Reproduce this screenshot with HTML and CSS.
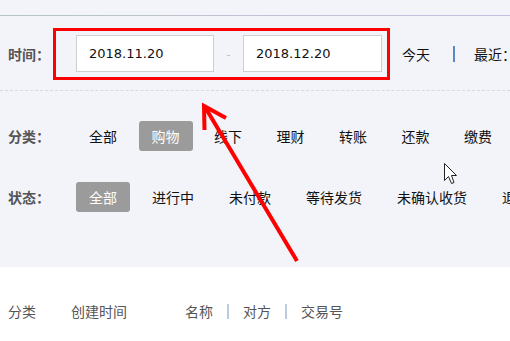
FILE: index.html
```html
<!DOCTYPE html>
<html lang="zh-CN">
<head>
    <title>交易记录</title>
    <link rel="stylesheet" href="styles.css">
    <meta name="viewport" content="width=device-width, initial-scale=1.0" charset="utf-8">
</head>
<body>
    <div class="page">
        <div class="filters">
            <div class="top-line"></div>

            <!-- time range -->
            <div class="row time-row">
                <span class="label">时间：</span>
                <div class="date-input">2018.11.20</div>
                <span class="dash">-</span>
                <div class="date-input">2018.12.20</div>
                <span class="quick today">今天</span>
                <span class="sep"></span>
                <span class="quick">最近：</span>
            </div>

            <div class="divider"></div>

            <!-- category -->
            <div class="row tag-row category-row">
                <span class="label">分类：</span>
                <span class="tag">全部</span>
                <span class="tag active">购物</span>
                <span class="tag">线下</span>
                <span class="tag">理财</span>
                <span class="tag">转账</span>
                <span class="tag">还款</span>
                <span class="tag">缴费</span>
            </div>

            <!-- status -->
            <div class="row tag-row status-row">
                <span class="label">状态：</span>
                <span class="tag active">全部</span>
                <span class="tag">进行中</span>
                <span class="tag">未付款</span>
                <span class="tag">等待发货</span>
                <span class="tag">未确认收货</span>
                <span class="tag">退款</span>
            </div>
        </div>

        <!-- list header -->
        <div class="list-head">
            <span class="col col-type">分类</span>
            <span class="col col-time">创建时间</span>
            <span class="col">名称</span>
            <span class="col-sep"></span>
            <span class="col">对方</span>
            <span class="col-sep"></span>
            <span class="col">交易号</span>
        </div>

        <!-- annotation: red box, arrow and mouse pointer -->
        <svg class="annot" width="510" height="341" viewBox="0 0 510 341">
            <rect x="54.5" y="29.5" width="334" height="49" fill="none" stroke="#ff0000" stroke-width="3"/>
            <line x1="205" y1="107" x2="297" y2="261" stroke="#ff0000" stroke-width="4"/>
            <polyline points="204.5,130 204,106 226,118" fill="none" stroke="#ff0000" stroke-width="4" stroke-linejoin="miter"/>
            <path d="M444.5 163.5 L444.5 180.5 L448.5 176.5 L451.5 183.5 L454 182.5 L451.5 175.5 L456.5 175.5 Z" fill="#fff" stroke="#222" stroke-width="1"/>
        </svg>
    </div>
</body>
</html>
```

FILE: styles.css
```css
        html, body {
            margin: 0;
            padding: 0;
        }
        body {
            font-family: "Noto Sans CJK SC", "DejaVu Sans", sans-serif;
            font-size: 14px;
            color: #222;
            background-color: #fff;
            overflow: hidden;
        }
        .page {
            position: relative;
            width: 510px;
            height: 341px;
            overflow: hidden;
        }
        .filters {
            background-color: #f3f4f9;
            padding-top: 15px;
            padding-bottom: 55px;
        }
        .top-line {
            height: 1px;
            background: linear-gradient(to right, #b6c6c4, #c7bddf);
        }
        .row {
            display: flex;
            align-items: center;
            white-space: nowrap;
            padding-left: 8px;
        }
        .row > * {
            flex: none; /* row is wider than the window, nothing may shrink */
        }
        .label {
            width: 68px;
            font-weight: bold;
            color: #555;
        }
        .time-row {
            margin-top: 19px;
        }
        .date-input {
            width: 112px;
            height: 35px;
            line-height: 35px;
            padding-left: 12px;
            padding-right: 12px;
            border: 1px solid #cfcfcf;
            background-color: #fff;
            font-family: "DejaVu Sans", sans-serif;
            font-size: 13px;
            color: #111;
        }
        .date-input + .dash + .date-input {
            width: 113px;
        }
        .dash {
            width: 29px;
            text-align: center;
            color: #c9b9a9;
            font-size: 12px;
        }
        .quick {
            color: #111;
        }
        .today {
            margin-left: 20px;
        }
        .sep {
            width: 2px;
            height: 16px;
            margin: 0 19px 0 23px;
            background-color: #5d87c2;
        }
        .divider {
            margin-top: 18px;
            border-top: 1px dashed #d6d9df;
        }
        .tag-row {
            margin-top: 30px;
            gap: 9px;
        }
        .category-row {
            gap: 8.5px;
        }
        .status-row {
            margin-top: 31px;
        }
        .tag-row .label {
            width: 59px;
        }
        .category-row .label {
            width: 59.5px;
        }
        .tag {
            height: 30px;
            line-height: 30px;
            padding: 0 13px;
            border-radius: 3px;
            color: #111;
        }
        .tag.active {
            background-color: #9b9b9b;
            color: #fff;
        }
        .list-head {
            display: flex;
            align-items: center;
            white-space: nowrap;
            padding: 34px 0 0 8px;
            color: #555;
            line-height: 20px;
        }
        .col-type {
            width: 63px;
        }
        .col-time {
            width: 114px;
        }
        .col-sep {
            width: 2px;
            height: 15px;
            margin: 0 14px;
            background-color: #bcccdf;
        }
        .annot {
            position: absolute;
            top: 0;
            left: 0;
            pointer-events: none;
        }
```
